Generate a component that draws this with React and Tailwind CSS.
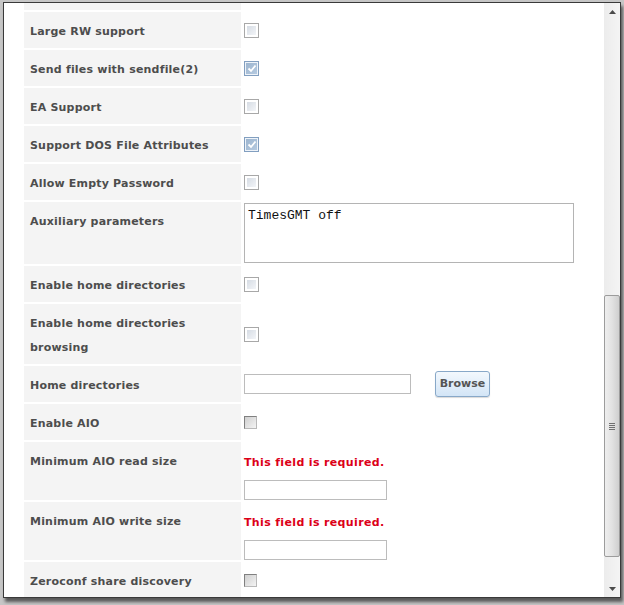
import React from "react";

const FONT = "font-[family-name:'DejaVu_Sans',Verdana,sans-serif]";

function Box({ checked }) {
  if (checked) {
    return (
      <div className="w-[15px] h-[15px] border border-[#829fc0] bg-[#eef3f9] p-[1px]">
        <div className="w-full h-full bg-gradient-to-br from-[#9db5cf] to-[#b5cae0] flex items-center justify-center">
          <svg width="10" height="9" viewBox="0 0 10 9">
            <path d="M1.5 4.5 L4 7 L8.5 1.5" stroke="#ffffff" strokeWidth="1.8" fill="none" />
          </svg>
        </div>
      </div>
    );
  }
  return (
    <div className="w-[15px] h-[15px] border border-[#a8a8a8] bg-white p-[2px]">
      <div className="w-full h-full bg-gradient-to-br from-[#d6dce4] to-[#f3f5f8]" />
    </div>
  );
}

function ClassicBox() {
  return (
    <div className="w-[13px] h-[13px] border border-t-[#808080] border-l-[#808080] border-r-[#b8b8b8] border-b-[#b8b8b8] bg-gradient-to-br from-[#cfcfcf] to-[#f4f4f4]" />
  );
}

function Row({ label, children, valueClass = "items-center" }) {
  return (
    <div className="flex gap-[3px]">
      <div className="w-[217px] shrink-0 bg-[#f4f4f4] px-[6px] pt-[8px] pb-[4px] leading-[24px] font-bold text-[11px] tracking-[0.2px] text-[#4d4d4d]">
        {label}
      </div>
      <div className={`flex ${valueClass}`}>{children}</div>
    </div>
  );
}

function Input({ w }) {
  return <div className={`${w} h-[20px] border border-[#bcbcbc] bg-white`} />;
}

function ErrorField() {
  return (
    <div className="flex flex-col items-start pt-[8px]">
      <div className="leading-[24px] text-[11px] font-bold tracking-[0.35px] text-[#dc0018] translate-y-[1px]">This field is required.</div>
      <div className="mt-[6px]">
        <Input w="w-[143px]" />
      </div>
    </div>
  );
}

export default function App() {
  return (
    <div className={`w-[624px] h-[605px] overflow-hidden bg-[#c6c6c6] pt-[2px] pl-[3px] ${FONT}`}>
      <div className="w-[618px] h-[596px] border border-[#3a3a3a] bg-white flex shadow-[2px_4px_3px_rgba(0,0,0,0.55)]">
        <div className="w-[600px] h-full overflow-hidden pl-[20px]">
          <div className="flex flex-col gap-[2px]">
            <div className="h-[7px] w-[217px] bg-[#f4f4f4]" />
            <Row label="Large RW support"><Box /></Row>
            <Row label="Send files with sendfile(2)"><Box checked /></Row>
            <Row label="EA Support"><Box /></Row>
            <Row label="Support DOS File Attributes"><Box checked /></Row>
            <Row label="Allow Empty Password"><Box /></Row>
            <Row label="Auxiliary parameters" valueClass="items-start py-[1px]">
              <textarea
                readOnly
                defaultValue="TimesGMT off"
                className="w-[330px] h-[60px] border border-[#b4b4b4] px-[3px] pt-[4px] resize-none outline-none font-[family-name:'Liberation_Mono',monospace] text-[13px] leading-[15px] text-[#111111]"
              />
            </Row>
            <Row label="Enable home directories"><Box /></Row>
            <Row label="Enable home directories browsing"><Box /></Row>
            <Row label="Home directories">
              <Input w="w-[167px]" />
              <div className="ml-[24px] w-[55px] h-[26px] rounded-[3px] border border-[#88a8c8] bg-gradient-to-b from-[#f3f8fd] to-[#d3e5f6] flex items-center justify-center text-[11px] font-bold text-[#555555] shadow-[0_1px_1px_rgba(0,0,0,0.15)]">
                Browse
              </div>
            </Row>
            <Row label="Enable AIO"><ClassicBox /></Row>
            <Row label="Minimum AIO read size" valueClass="items-start"><ErrorField /></Row>
            <Row label="Minimum AIO write size" valueClass="items-start"><ErrorField /></Row>
            <Row label="Zeroconf share discovery"><ClassicBox /></Row>
          </div>
        </div>
        <div className="w-[16px] h-full bg-gradient-to-r from-[#ececec] to-[#f4f4f4] flex flex-col">
          <div className="h-[18px] flex items-center justify-center">
            <svg width="7" height="4" viewBox="0 0 7 4"><path d="M0 4 L3.5 0 L7 4 Z" fill="#4a4a4a" /></svg>
          </div>
          <div className="flex-1 flex flex-col">
            <div className="h-[274px]" />
            <div className="h-[262px] rounded-[2px] border border-[#9c9c9c] bg-gradient-to-r from-[#eeeeee] via-[#e2e2e2] to-[#cfcfcf] flex items-center justify-center">
              <div className="flex flex-col gap-[1px]">
                <div className="w-[6px] h-[1px] bg-[#707070]" />
                <div className="w-[6px] h-[1px] bg-[#707070]" />
                <div className="w-[6px] h-[1px] bg-[#707070]" />
                <div className="w-[6px] h-[1px] bg-[#707070]" />
              </div>
            </div>
          </div>
          <div className="h-[17px] flex items-center justify-center">
            <svg width="7" height="4" viewBox="0 0 7 4"><path d="M0 0 L7 0 L3.5 4 Z" fill="#4a4a4a" /></svg>
          </div>
        </div>
      </div>
    </div>
  );
}
